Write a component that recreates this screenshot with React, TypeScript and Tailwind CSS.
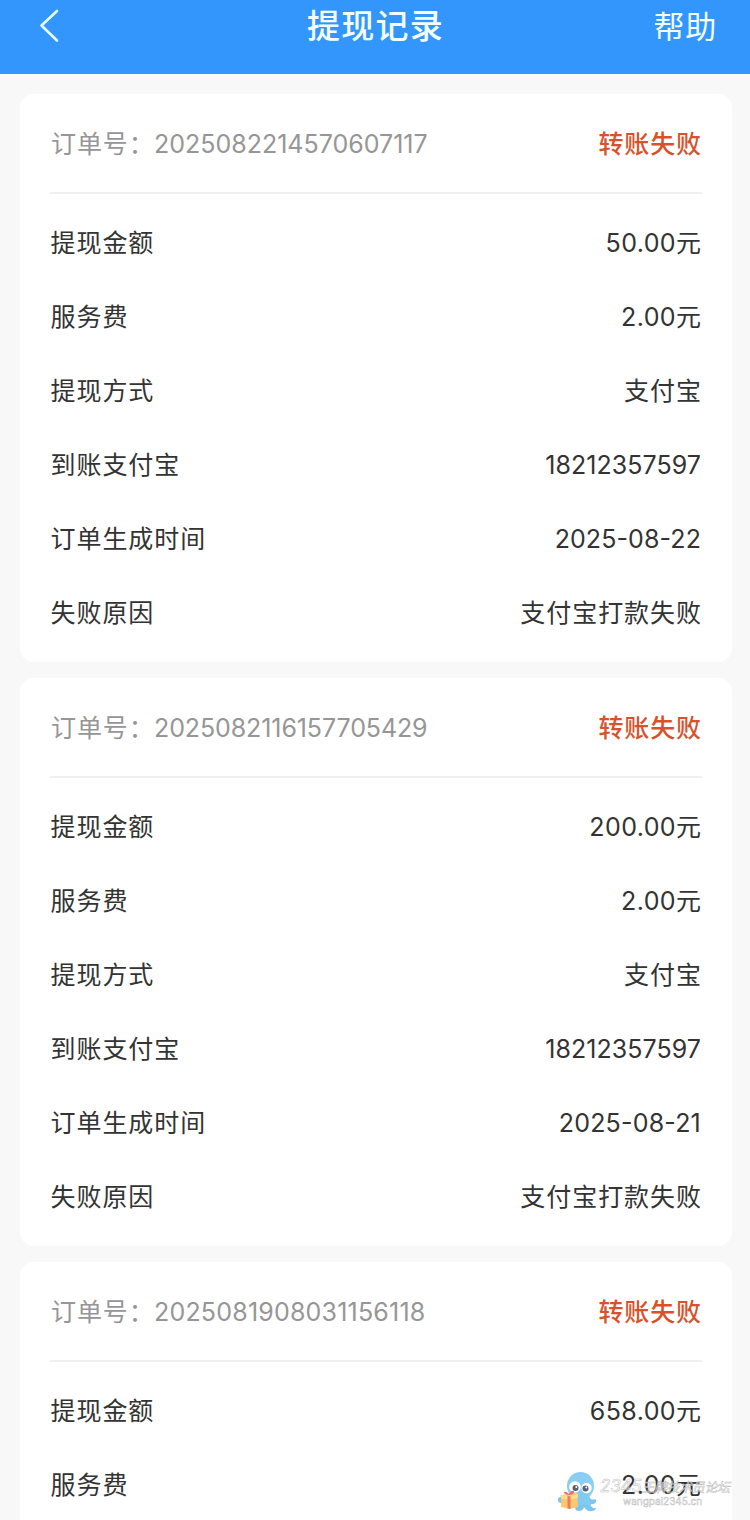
type Field = { label: string; value: string; tracking: string };
type Order = { no: string; noTracking: string; fields: Field[] };

const cjk = 'tracking-[0.95px] mr-[-0.95px]';

const orders: Order[] = [
  {
    no: '2025082214570607117',
    noTracking: 'tracking-[0px]',
    fields: [
      { label: '提现金额', value: '50.00', tracking: 'tracking-[0.4px]' },
      { label: '服务费', value: '2.00', tracking: 'tracking-[0.4px]' },
      { label: '提现方式', value: '支付宝', tracking: cjk },
      { label: '到账支付宝', value: '18212357597', tracking: 'tracking-[0.05px]' },
      { label: '订单生成时间', value: '2025-08-22', tracking: 'tracking-[0.1px]' },
      { label: '失败原因', value: '支付宝打款失败', tracking: cjk },
    ],
  },
  {
    no: '2025082116157705429',
    noTracking: 'tracking-[-0.1px]',
    fields: [
      { label: '提现金额', value: '200.00', tracking: 'tracking-[0.4px]' },
      { label: '服务费', value: '2.00', tracking: 'tracking-[0.4px]' },
      { label: '提现方式', value: '支付宝', tracking: cjk },
      { label: '到账支付宝', value: '18212357597', tracking: 'tracking-[0.05px]' },
      { label: '订单生成时间', value: '2025-08-21', tracking: 'tracking-[0.2px]' },
      { label: '失败原因', value: '支付宝打款失败', tracking: cjk },
    ],
  },
  {
    no: '2025081908031156118',
    noTracking: 'tracking-[0.2px]',
    fields: [
      { label: '提现金额', value: '658.00', tracking: 'tracking-[0.4px]' },
      { label: '服务费', value: '2.00', tracking: 'tracking-[0.4px]' },
    ],
  },
];

function Header() {
  return (
    <header className="flex h-[74px] shrink-0 items-start justify-between bg-[#3296fd] pr-[33px] pl-[38px] text-[#f5feff]">
      <div className="w-[90px] pt-[8px]">
        <svg width="24" height="36" viewBox="0 0 24 36" fill="none" stroke="#e8fcff" strokeWidth="2.6" strokeLinecap="round" strokeLinejoin="round">
          <path d="M19 3 3.5 17.500 19 32.500" />
        </svg>
      </div>
      <h1 className="mr-[4px] pt-[4px] text-[33px] leading-[44px] font-medium tracking-[1.3px]">提现记录</h1>
      <a className="w-[90px] pt-[5px] text-right text-[31px] leading-[44px] tracking-[0.8px]">帮助</a>
    </header>
  );
}

function OrderCard({ order }: { order: Order }) {
  return (
    <section className="h-[568px] shrink-0 rounded-[14px] bg-white px-[30px]">
      <div className="flex h-[100px] items-center justify-between border-b-2 border-[#f0f0f0] pt-[4px] text-[25px]">
        <div className="flex items-center whitespace-nowrap text-[#969696]">
          <span className="w-[104px] pl-px tracking-[0.9px]">订单号：</span>
          <span className={order.noTracking}>{order.no}</span>
        </div>
        <span className="font-medium tracking-[0.9px] text-[#d9512c]">转账失败</span>
      </div>
      <dl className="pt-[13px]">
        {order.fields.map((f) => (
          <div key={f.label} className="flex h-[74px] items-center justify-between pr-px pl-[0.5px] text-[25px] text-[#333333]">
            <dt className="tracking-[0.95px]">{f.label}</dt>
            <dd className="flex [font-feature-settings:'case']">
              <span className={f.tracking}>{f.value}</span>
              {f.value.includes('.') && <span>元</span>}
            </dd>
          </div>
        ))}
      </dl>
    </section>
  );
}

function Watermark() {
  return (
    <div className="absolute top-[1471px] left-[557px] flex w-[176px] gap-[2px]">
      <svg className="shrink-0" width="41" height="42" viewBox="0 0 41 42">
        <path d="M13 24 7 31q0 6 7 6l4-1q0 4 4 4 4 0 5-4 3 5 8 4 3 0 4-3-4 1-6-4 4 1 6-2 1-2-1-3-3 2-5-1l-2-6z" fill="#7cc6ed" />
        <ellipse cx="23.500" cy="15" rx="13.500" ry="14" fill="#8acff2" />
        <path d="M20 20h10l4 14H18z" fill="#83caef" />
        <circle cx="18" cy="16" r="5.800" fill="#fff" />
        <circle cx="29.500" cy="17" r="5.200" fill="#fff" />
        <circle cx="18.500" cy="17" r="3" fill="#536078" />
        <circle cx="28.500" cy="17.500" r="3" fill="#536078" />
        <circle cx="19.300" cy="16" r="1" fill="#fff" />
        <circle cx="29.300" cy="16.500" r="1" fill="#fff" />
        <path d="M4 24l16-2 1 14-8 2-9-2z" fill="#f9c870" />
        <path d="M3.500 24l9 1 8.500-2v4l-8.500 1.500-9-1z" fill="#fddc8e" />
        <path d="M10.500 25l3 .3V38l-3-.6z" fill="#ee7a62" />
        <path d="M12 24q-6-1-5-3 2-1 5 2 2-4 5-3 1 3-5 4z" fill="#ed6d70" />
        <path d="M4 26q-4 0-3 4 1 2 3 2z" fill="#7cc6ed" />
      </svg>
      <div className="pt-[7px] whitespace-nowrap">
        <div className="text-[13px] leading-[16px] tracking-[-0.4px] text-white/50 italic [-webkit-text-stroke:0.5px_#bcbcbc]">
          <span className="text-[17px] tracking-[-0.2px]">2345</span>王牌技术员论坛
        </div>
        <div className="pl-[23px] text-[10px] leading-[12px] tracking-[0px] text-white/60 [-webkit-text-stroke:0.5px_#c0c0c0]">wangpai2345.cn</div>
      </div>
    </div>
  );
}

export default function App() {
  return (
    <div className="relative flex h-[1520px] w-[750px] flex-col overflow-hidden bg-[#f8f8f8] font-[Inter,'Noto_Sans_CJK_SC',sans-serif]">
      <Header />
      <main className="flex flex-col gap-[16px] pt-[20px] pr-[18px] pl-[20px]">
        {orders.map((o) => (
          <OrderCard key={o.no} order={o} />
        ))}
      </main>
      <Watermark />
    </div>
  );
}
